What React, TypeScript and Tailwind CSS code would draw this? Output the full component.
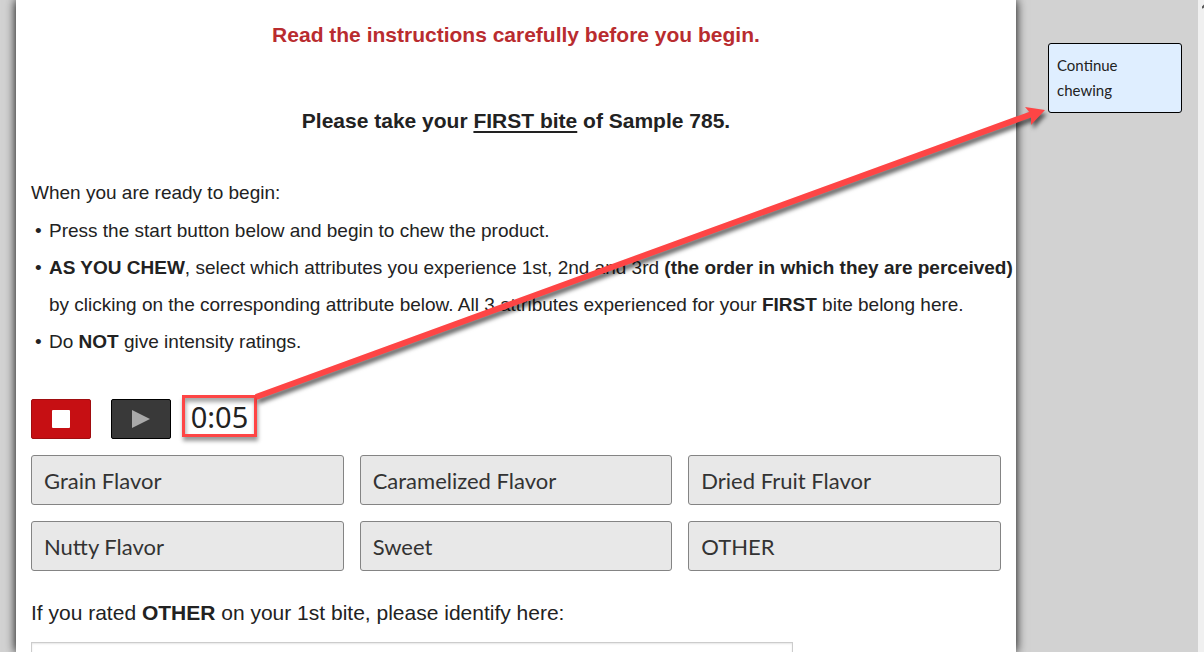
import { useState } from "react";
import type { ReactNode } from "react";

const ATTRIBUTES = [
  "Grain Flavor",
  "Caramelized Flavor",
  "Dried Fruit Flavor",
  "Nutty Flavor",
  "Sweet",
  "OTHER",
];

function Bullet({ children }: { children: ReactNode }) {
  return (
    <li className="flex before:w-[14px] before:shrink-0 before:content-['•']">
      <span>{children}</span>
    </li>
  );
}

function Instructions() {
  return (
    <section className="text-[19px] leading-[37px]">
      <p>When you are ready to begin:</p>
      <ul className="-mr-[15px] mt-px pl-1">
        <Bullet>Press the start button below and begin to chew the product.</Bullet>
        <Bullet>
          <strong>AS YOU CHEW</strong>, select which attributes you experience 1st, 2nd and 3rd{" "}
          <strong>(the order in which they are perceived)</strong> by clicking on the corresponding
          attribute below. All 3 attributes experienced for your <strong>FIRST</strong> bite belong
          here.
        </Bullet>
        <Bullet>
          Do <strong>NOT</strong> give intensity ratings.
        </Bullet>
      </ul>
    </section>
  );
}

function TimerControls() {
  return (
    <div className="flex h-10 items-start">
      <button
        className="flex h-10 w-[60px] items-center justify-center rounded-[2px] border border-[#a00d10] bg-[#c60f13]"
        aria-label="Stop"
      >
        <span className="size-[18px] rounded-[1px] bg-white" />
      </button>
      <button
        className="ml-5 flex h-10 w-[60px] items-center justify-center rounded-[2px] border border-black bg-[#393939]"
        aria-label="Start"
      >
        <svg width="18" height="18" viewBox="0 0 18 18" aria-hidden="true">
          <path d="M0 0 L18 9 L0 18 Z" fill="#a9a9a9" />
        </svg>
      </button>
      <output className="-mt-1 ml-[11px] flex h-[42px] min-w-[75px] items-center justify-center border-3 border-[#fe4545] pt-px font-['Noto_Sans','Open_Sans',sans-serif] text-[29px] leading-none shadow-[1px_4px_4px_rgba(0,0,0,0.4),inset_1px_4px_4px_rgba(0,0,0,0.35)]">
        0:05
      </output>
    </div>
  );
}

function CalloutArrow() {
  return (
    <svg
      className="pointer-events-none absolute left-0 top-0 h-[652px] w-[1204px] drop-shadow-[2px_4px_2px_rgba(0,0,0,0.6)]"
      viewBox="0 0 1204 652"
      aria-hidden="true"
    >
      <path d="M256 397 L1032 114" stroke="#fe4545" strokeWidth="6" />
      <path d="M1045 110 L1025 107 L1031 114 L1031 125 Z" fill="#fe4545" />
    </svg>
  );
}

export default function App() {
  const [selected, setSelected] = useState<string[]>([]);

  const toggle = (name: string) => {
    setSelected((prev) =>
      prev.includes(name) ? prev.filter((n) => n !== name) : [...prev, name]
    );
  };

  return (
    <div className="relative flex h-screen overflow-hidden bg-[#d2d2d2] pl-4 font-['Liberation_Sans',Arial,sans-serif] text-[#222]">
      <main className="min-w-0 flex-1 bg-white px-[15px] pt-4 shadow-[0_0_10px_#000]">
        <h1 className="text-center text-[21px] font-bold leading-[38px] text-[#b92c2f]">
          Read the instructions carefully before you begin.
        </h1>
        <h2 className="mt-12 text-center text-[21px] font-bold leading-[38px]">
          Please take your{" "}
          <span className="underline decoration-2 underline-offset-[3px]">FIRST bite</span> of Sample
          785.
        </h2>

        <div className="mt-[34px]">
          <Instructions />
        </div>

        <div className="mt-[39px]">
          <TimerControls />
        </div>

        <div className="mt-4 grid grid-cols-3 gap-4">
          {ATTRIBUTES.map((name) => (
            <button
              key={name}
              onClick={() => toggle(name)}
              aria-pressed={selected.includes(name)}
              className="h-[50px] rounded-[3px] border border-[#848484] bg-[#e8e8e8] px-3 text-left font-[Lato,sans-serif] text-[22px] text-[#333] aria-pressed:bg-[#cfcfcf]"
            >
              {name}
            </button>
          ))}
        </div>

        <label htmlFor="other" className="mt-[23px] block text-[21px] leading-[38px]">
          If you rated <strong>OTHER</strong> on your 1st bite, please identify here:
        </label>
        <input
          id="other"
          type="text"
          className="mt-[10px] h-10 w-[762px] max-w-full border border-[#ccc] bg-white px-2 text-[18px] shadow-[inset_0_1px_2px_rgba(0,0,0,0.1)]"
        />
      </main>

      <aside className="w-[182px] shrink-0 pl-8 pr-4 pt-[43px]">
        <div
          role="status"
          className="rounded-[3px] border border-black bg-[#dfeeff] px-2 py-[9px] font-[Lato,sans-serif] text-[15px] leading-[25px]"
        >
          Continue
          <br />
          chewing
        </div>
      </aside>

      <div className="w-[6px] shrink-0 overflow-hidden bg-[#f0f0f0]">
        <svg width="10" height="8" viewBox="0 0 10 8" className="ml-1 mt-[3px]" aria-hidden="true">
          <path d="M0 5 L4 1 L8 5" fill="none" stroke="#555" strokeWidth="2" />
        </svg>
      </div>

      <CalloutArrow />
    </div>
  );
}
